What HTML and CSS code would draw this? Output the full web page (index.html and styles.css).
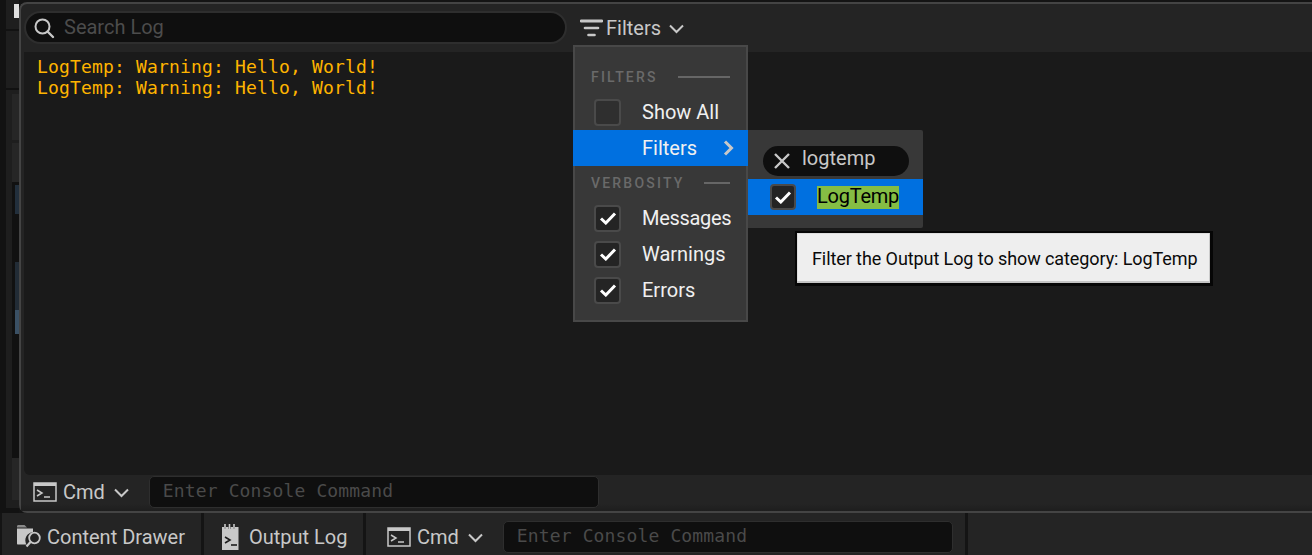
FILE: index.html
```html
<!DOCTYPE html>
<html lang="en">
<head>
<meta charset="utf-8">
<title>Output Log</title>
<link rel="stylesheet" href="styles.css">
</head>
<body>
<div class="app">
  <div class="main">
    <aside class="strip">
      <div class="strip-col">
        <div class="s-top"><span class="s-white"></span></div>
        <div class="s-block s-a"></div>
        <div class="s-block s-b"></div>
        <div class="s-list">
          <span class="s-blue s-b1"></span>
          <span class="s-blue s-b2"></span>
          <span class="s-blue s-b3"></span>
        </div>
        <div class="s-block s-c"></div>
      </div>
    </aside>
    <section class="window">
      <header class="head">
        <div class="search">
          <svg class="i-search" width="24" height="24" viewBox="0 0 24 24"><circle cx="10.500" cy="10.500" r="7" fill="none" stroke="#c8c8c8" stroke-width="2"/><path d="M15.500 15.500 21 21" stroke="#c8c8c8" stroke-width="2.400" stroke-linecap="round"/></svg>
          <span class="search-text">Search Log</span>
        </div>
        <div class="filters">
          <svg width="23" height="18" viewBox="0 0 23 18"><path d="M1 2h21" stroke="#c8c8c8" stroke-width="2.800" stroke-linecap="round"/><path d="M5 9h13" stroke="#c8c8c8" stroke-width="2.600" stroke-linecap="round"/><path d="M8.500 16h6" stroke="#c8c8c8" stroke-width="2.600" stroke-linecap="round"/></svg>
          <span>Filters</span>
          <svg class="chev" width="15" height="10" viewBox="0 0 15 10"><path d="M1 1.500l6.500 6.500L14 1.500" fill="none" stroke="#c8c8c8" stroke-width="2"/></svg>
        </div>
      </header>
      <div class="log">
        <div>LogTemp: Warning: Hello, World!</div>
        <div>LogTemp: Warning: Hello, World!</div>
      </div>
      <footer class="cmdbar">
        <div class="cmd">
          <svg width="24" height="20" viewBox="0 0 24 20"><rect x="1" y="1" width="22" height="18" fill="none" stroke="#c8c8c8" stroke-width="1.500"/><path d="M1 2.500h22" stroke="#c8c8c8" stroke-width="3"/><path d="M4 8l5 3-5 3" fill="none" stroke="#c8c8c8" stroke-width="1.500"/><path d="M11 15h6" stroke="#c8c8c8" stroke-width="1.500"/></svg>
          <span>Cmd</span>
          <svg class="chev" width="15" height="10" viewBox="0 0 15 10"><path d="M1 1.500l6.500 6.500L14 1.500" fill="none" stroke="#c8c8c8" stroke-width="2"/></svg>
        </div>
        <div class="console">Enter Console Command</div>
      </footer>
    </section>
  </div>
  <nav class="status">
    <div class="tab tab-drawer">
      <svg width="26" height="26" viewBox="0 0 26 26"><path d="M0 2.500C0 1.500.5 1 1.500 1h6L10 3.500H0z" fill="#8a8a8a"/><path d="M0 4.500h16v3.800a8 8 0 0 0-6.500 12.200H1c-.6 0-1-.4-1-1z" fill="#c8c8c8"/><circle cx="17.500" cy="14" r="5.300" fill="none" stroke="#c8c8c8" stroke-width="1.800"/><path d="M13.500 18 9.500 22.500" stroke="#c8c8c8" stroke-width="2.200"/></svg>
      <span>Content Drawer</span>
    </div>
    <div class="tab tab-output">
      <svg width="18" height="26" viewBox="0 0 18 26"><path d="M0 3h2v2h2V3h2.500v2h2V3H11v2h2V3h3.500v23H0z" fill="#c8c8c8"/><path d="M3 0v5M7.500 0v5M12 0v5" stroke="#c8c8c8" stroke-width="1.600"/><path d="M3 13l5 3-5 3" fill="none" stroke="#1c1c1c" stroke-width="1.600"/><path d="M9 21h6" stroke="#1c1c1c" stroke-width="1.600"/></svg>
      <span>Output Log</span>
    </div>
    <div class="tab tab-cmd">
      <div class="cmd">
        <svg width="24" height="20" viewBox="0 0 24 20"><rect x="1" y="1" width="22" height="18" fill="none" stroke="#c8c8c8" stroke-width="1.500"/><path d="M1 2.500h22" stroke="#c8c8c8" stroke-width="3"/><path d="M4 8l5 3-5 3" fill="none" stroke="#c8c8c8" stroke-width="1.500"/><path d="M11 15h6" stroke="#c8c8c8" stroke-width="1.500"/></svg>
        <span>Cmd</span>
        <svg class="chev" width="15" height="10" viewBox="0 0 15 10"><path d="M1 1.500l6.500 6.500L14 1.500" fill="none" stroke="#c8c8c8" stroke-width="2"/></svg>
      </div>
      <div class="console console-status">Enter Console Command</div>
    </div>
  </nav>

  <div class="menu">
    <div class="m-head m-head-first"><span>FILTERS</span><i></i></div>
    <div class="m-row"><span class="box"></span><span>Show All</span></div>
    <div class="m-row m-active"><span class="box box-none"></span><span>Filters</span>
      <svg class="sub-arrow" width="11" height="16" viewBox="0 0 11 16"><path d="M2 1.500 8.500 8 2 14.500" fill="none" stroke="#c8c8c8" stroke-width="3"/></svg>
    </div>
    <div class="m-head m-head-second"><span>VERBOSITY</span><i></i></div>
    <div class="m-row"><span class="box box-on"><svg width="18" height="14" viewBox="0 0 18 14"><path d="M2 7.500 6.800 12 16 2.500" fill="none" stroke="#fff" stroke-width="3"/></svg></span><span class="tight">Messages</span></div>
    <div class="m-row"><span class="box box-on"><svg width="18" height="14" viewBox="0 0 18 14"><path d="M2 7.500 6.800 12 16 2.500" fill="none" stroke="#fff" stroke-width="3"/></svg></span><span>Warnings</span></div>
    <div class="m-row"><span class="box box-on"><svg width="18" height="14" viewBox="0 0 18 14"><path d="M2 7.500 6.800 12 16 2.500" fill="none" stroke="#fff" stroke-width="3"/></svg></span><span>Errors</span></div>
  </div>

  <div class="submenu">
    <div class="pill">
      <svg width="18" height="18" viewBox="0 0 18 18"><path d="M2 2l14 14M16 2 2 16" stroke="#c8c8c8" stroke-width="2.400"/></svg>
      <span class="pill-text">logtemp</span>
    </div>
    <div class="sub-row">
      <span class="box box-on box-sub"><svg width="18" height="14" viewBox="0 0 18 14"><path d="M2 7.500 6.800 12 16 2.500" fill="none" stroke="#fff" stroke-width="3"/></svg></span>
      <span class="hl">LogTemp</span>
    </div>
  </div>

  <div class="tooltip">Filter the Output Log to show category: LogTemp</div>
</div>
</body>
</html>
```
FILE: styles.css
```css
* { box-sizing: border-box; }
html, body { margin: 0; padding: 0; height: 100%; overflow: hidden; background: #151515; }
body { font-family: Roboto, "Liberation Sans", sans-serif; }

.app { position: relative; width: 1312px; height: 555px; display: flex; flex-direction: column; background: #141414; }
.main { flex: 1; display: flex; min-height: 0; }

.strip { width: 19px; padding: 0 0 5px 6px; background: #121212; }
.strip-col { height: 100%; background: #1e1e1e; padding: 0 0 8px 6px; display: flex; flex-direction: column; }
.s-top { height: 94px; padding-top: 4px; background: linear-gradient(#1e1e1e 0 29px, #121212 29px 31px, #1e1e1e 31px 88px, #111 88px 90px, #1e1e1e 90px); margin-left: -6px; padding-left: 6px; }
.s-white { display: block; margin-left: 2px; width: 5px; height: 14px; background: #e0e0e0; }
.s-block { background: #262626; }
.s-a { height: 46px; }
.s-b { height: 39px; margin-top: 3px; }
.s-c { flex: 1; }
.s-list { height: 276px; background: #111; padding-top: 3px; display: flex; flex-direction: column; align-items: flex-end; }
.s-blue { display: block; width: 4px; }
.s-b1 { height: 29px; background: #222f3c; }
.s-b2 { height: 48px; margin-top: 48px; background: #222c36; }
.s-b3 { height: 24px; background: #3a5064; }

.window { flex: 1; min-width: 0; display: flex; flex-direction: column; margin-top: 2px; border: 2px solid #444; border-right: 0; border-radius: 8px 0 0 8px; background: #242424; }
.head { height: 48px; flex: none; display: flex; align-items: center; padding: 0 0 1px 3px; }
.search { width: 543px; height: 33px; background: #0f0f0f; border: 2px solid #2e2e2e; border-radius: 17px; display: flex; align-items: center; padding-left: 6px; gap: 8px; }
.search-text { color: #4c4c4c; font-size: 20px; position: relative; top: -1px; }
.filters { margin-left: 13px; display: flex; align-items: center; gap: 3px; color: #c8c8c8; font-size: 20px; }
.filters .chev { margin-left: 5px; margin-top: 2px; }

.log { flex: 1; background: #1a1a1a; border-radius: 0 0 0 6px; margin-left: 3px; padding: 4px 0 0 13px; color: #ffb400; font-family: "DejaVu Sans Mono", monospace; font-size: 18px; letter-spacing: 0.16px; line-height: 21px; }

.cmdbar { height: 36px; flex: none; display: flex; align-items: center; padding: 0 0 2px 12px; background: linear-gradient(#242424 80%, #1e1e1e); }
.cmd { display: flex; align-items: center; gap: 6px; color: #c8c8c8; font-size: 20px; }
.cmd .chev { margin-left: 3px; margin-top: 2px; }
.console { width: 450px; height: 32px; margin-left: 20px; padding-left: 13px; background: #0f0f0f; border: 1px solid #2e2e2e; border-radius: 5px; color: #4a4a4a; font-family: "DejaVu Sans Mono", monospace; font-size: 18px; letter-spacing: 0.13px; line-height: 28px; }

.status { height: 42px; flex: none; display: flex; padding-left: 2px; background: #141414; }
.tab { display: flex; align-items: center; height: 100%; padding-top: 8px; padding-bottom: 2px; background: #242424; border-right: 3px solid #141414; color: #c8c8c8; font-size: 20px; }
.tab-drawer { width: 202px; padding-left: 15px; gap: 4px; }
.tab-output { width: 162px; padding-left: 18px; gap: 9px; }
.tab-cmd { width: 602px; padding-left: 21px; }
.status::after { content: ""; flex: 1; background: #242424; }

.menu { position: absolute; left: 573px; top: 45px; width: 175px; height: 277px; background: #383838; border: 2px solid #484848; padding-top: 20px; }
.m-head { display: flex; align-items: center; padding: 0 16px; gap: 20px; color: #6a6a6a; font-size: 14px; font-weight: 500; letter-spacing: 2.200px; height: 20px; }
.m-head i { flex: 1; height: 2px; background: #666; }
.m-head-first { margin-bottom: 7px; }
.m-head-second { height: 34px; }
.m-row { height: 36px; display: flex; align-items: center; padding-left: 19px; color: #f0f0f0; font-size: 20px; gap: 21px; margin: 0 -2px 0 0; }
.tight { letter-spacing: -0.300px; }
.m-active { background: #0070e0; margin-left: -2px; padding-left: 21px; position: relative; }
.sub-arrow { position: absolute; left: 150px; top: 10px; }
.box { width: 27px; height: 27px; flex: none; background: #2f2f2f; border: 2px solid #4a4a4a; border-radius: 4px; display: flex; align-items: center; justify-content: center; }
.box-on { background: #242424; }
.box-none { visibility: hidden; }

.submenu { position: absolute; left: 748px; top: 130px; width: 175px; height: 98px; background: #383838; border-radius: 0 2px 2px 0; padding-top: 16px; }
.pill { width: 146px; height: 30px; margin-left: 15px; background: #0f0f0f; border-radius: 15px; display: flex; align-items: center; padding-left: 10px; gap: 11px; color: #c8c8c8; font-size: 20px; }
.pill-text { position: relative; top: -3px; }
.sub-row { height: 36px; margin-top: 3px; background: #0070e0; display: flex; align-items: center; padding-left: 22px; gap: 21px; }
.box-sub { width: 26px; height: 26px; }
.hl { background: #85bd44; color: #000; font-size: 20px; letter-spacing: -0.250px; line-height: 20px; height: 23px; }

.tooltip { position: absolute; left: 795px; top: 231px; width: 418px; height: 55px; background: #eee; border: 2px solid #060606; border-width: 2px 3px 3px 2px; box-shadow: inset 0 -2px 0 #c4c4c4, inset -1px 0 0 #ccc, inset 1px 1px 0 #ddd; color: #0a0a0a; font-size: 18px; letter-spacing: -0.085px; display: flex; align-items: center; padding-left: 15px; }
```
